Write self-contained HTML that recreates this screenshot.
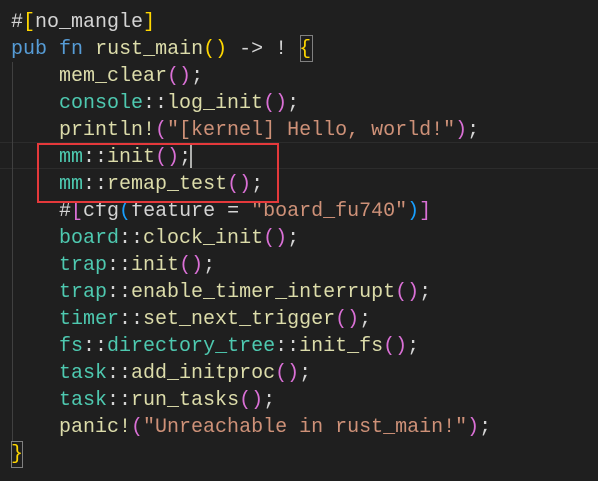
<!DOCTYPE html>
<html><head><meta charset="utf-8"><style>
html,body{margin:0;padding:0;background:#1f1f1f;width:598px;height:481px;overflow:hidden}
pre{position:absolute;left:11px;top:9px;margin:0;font-family:"Liberation Mono",monospace;font-size:20px;line-height:27px;color:#d4d4d4;white-space:pre}
.k{color:#569cd6}.f{color:#dcdcaa}.t{color:#4ec9b0}.s{color:#ce9178}
.g{color:#ffd700}.p{color:#da70d6}.b{color:#179fff}
.guide{position:absolute;left:12px;top:62px;width:1px;height:379px;background:#404040}
.cur{position:absolute;left:0;top:142px;width:598px;height:25px;border-top:1px solid #2c2c2c;border-bottom:1px solid #2c2c2c}
.red{position:absolute;left:37px;top:143px;width:238px;height:56px;border:2px solid #e5393b}
.bx{position:absolute;border:1px solid #808080}
.caret{position:absolute;left:190px;top:144px;width:2px;height:24px;background:#aeafad}
</style></head><body>
<div class="cur"></div>
<div class="guide"></div>
<div class="bx" style="left:300px;top:35px;width:11px;height:25px"></div>
<div class="bx" style="left:11px;top:441px;width:10px;height:25px"></div>
<pre>#<span class="g">[</span>no_mangle<span class="g">]</span>
<span class="k">pub</span> <span class="k">fn</span> <span class="f">rust_main</span><span class="g">()</span> -&gt; ! <span class="g">{</span>
    <span class="f">mem_clear</span><span class="p">()</span>;
    <span class="t">console</span>::<span class="f">log_init</span><span class="p">()</span>;
    <span class="f">println!</span><span class="p">(</span><span class="s">"[kernel] Hello, world!"</span><span class="p">)</span>;
    <span class="t">mm</span>::<span class="f">init</span><span class="p">()</span>;
    <span class="t">mm</span>::<span class="f">remap_test</span><span class="p">()</span>;
    #<span class="p">[</span>cfg<span class="b">(</span>feature = <span class="s">"board_fu740"</span><span class="b">)</span><span class="p">]</span>
    <span class="t">board</span>::<span class="f">clock_init</span><span class="p">()</span>;
    <span class="t">trap</span>::<span class="f">init</span><span class="p">()</span>;
    <span class="t">trap</span>::<span class="f">enable_timer_interrupt</span><span class="p">()</span>;
    <span class="t">timer</span>::<span class="f">set_next_trigger</span><span class="p">()</span>;
    <span class="t">fs</span>::<span class="t">directory_tree</span>::<span class="f">init_fs</span><span class="p">()</span>;
    <span class="t">task</span>::<span class="f">add_initproc</span><span class="p">()</span>;
    <span class="t">task</span>::<span class="f">run_tasks</span><span class="p">()</span>;
    <span class="f">panic!</span><span class="p">(</span><span class="s">"Unreachable in rust_main!"</span><span class="p">)</span>;
<span class="g">}</span></pre>
<div class="caret"></div>
<div class="red"></div>
</body></html>
